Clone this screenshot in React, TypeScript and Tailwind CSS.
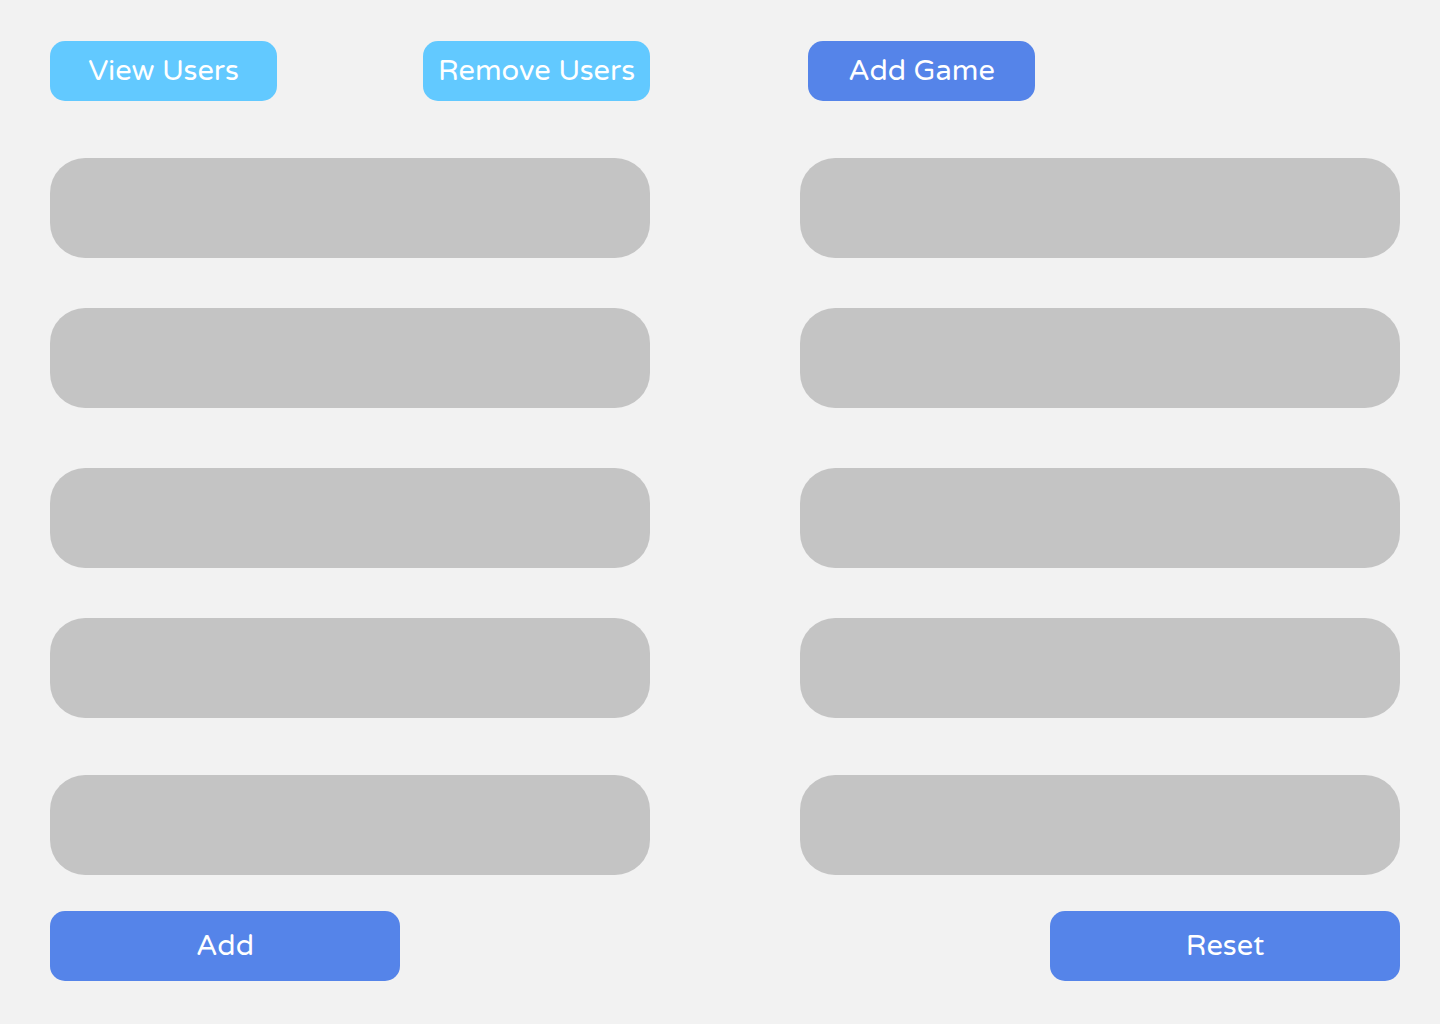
import React from 'react';

const gaps = ['mt-[57px]', 'mt-[50px]', 'mt-[60px]', 'mt-[50px]', 'mt-[57px]'];

const Bar: React.FC<{ gap: string }> = ({ gap }) => (
  <div className={`${gap} h-[100px] w-full rounded-[35px] bg-[#c4c4c4]`} />
);

const Btn: React.FC<{ label: string; light?: boolean; className?: string }> = ({ label, light, className }) => (
  <button
    className={`flex shrink-0 items-center justify-center rounded-[15px] text-white text-[29px] ${
      light ? 'bg-[#62c9ff]' : 'bg-[#5584e9]'
    } ${className ?? ''}`}
  >
    {label}
  </button>
);

export default function App() {
  return (
    <div
      className="min-h-[1024px] w-full bg-[#f2f2f2] pl-[50px] pt-[41px]"
      style={{ fontFamily: '"Varela Round", Nunito, "Noto Sans", sans-serif' }}
    >
      <div className="flex gap-[150px]">
        <div className="flex w-[600px] shrink-0 flex-col">
          <div className="flex justify-between">
            <Btn label="View Users" light className="h-[60px] w-[227px]" />
            <Btn label="Remove Users" light className="h-[60px] w-[227px]" />
          </div>
          {gaps.map((g, i) => (
            <Bar key={`l-${i}`} gap={g} />
          ))}
          <Btn label="Add" className="mt-[36px] h-[70px] w-[350px]" />
        </div>
        <div className="flex w-[600px] shrink-0 flex-col">
          <div className="flex">
            <Btn label="Add Game" className="ml-[8px] h-[60px] w-[227px]" />
          </div>
          {gaps.map((g, i) => (
            <Bar key={`r-${i}`} gap={g} />
          ))}
          <div className="flex justify-end">
            <Btn label="Reset" className="mt-[36px] h-[70px] w-[350px]" />
          </div>
        </div>
      </div>
    </div>
  );
}
